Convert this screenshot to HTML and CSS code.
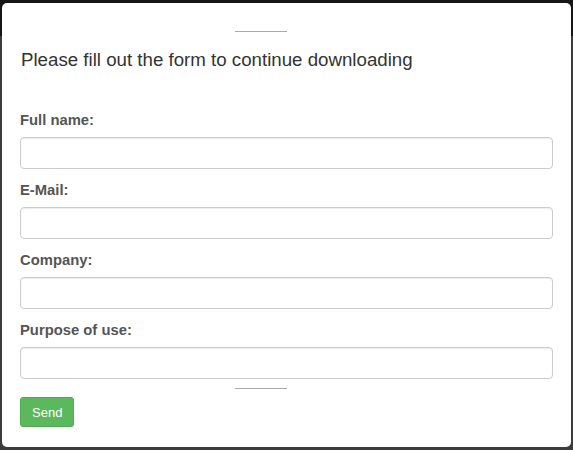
FILE: index.html
```html
<!DOCTYPE html>
<html>
<head>
<meta charset="utf-8">
<link rel="stylesheet" href="styles.css">
</head>
<body>
<div class="modal">
  <div class="divider"></div>
  <h4 class="title">Please fill out the form to continue downloading</h4>
  <form class="form">
    <div class="field">
      <label class="label">Full name:</label>
      <input class="input" type="text">
    </div>
    <div class="field">
      <label class="label">E-Mail:</label>
      <input class="input" type="text">
    </div>
    <div class="field">
      <label class="label">Company:</label>
      <input class="input" type="text">
    </div>
    <div class="field field-last">
      <label class="label">Purpose of use:</label>
      <input class="input" type="text">
    </div>
    <div class="divider divider-bottom"></div>
    <button class="btn" type="button">Send</button>
  </form>
</div>
</body>
</html>
```

FILE: styles.css
```css
html, body {
  margin: 0;
  padding: 0;
}
body {
  width: 573px;
  height: 450px;
  overflow: hidden;
  background: linear-gradient(to bottom, #161616 0, #161616 36px, #3c3c3c 36px, #3c3c3c 100%);
  font-family: "Liberation Sans", Arial, sans-serif;
  color: #333;
}
.modal {
  box-sizing: border-box;
  margin: 3px 2px 0;
  width: 569px;
  height: 444px;
  background: #fff;
  border-radius: 5px;
  padding: 28px 18px 0;
}
.divider {
  width: 52px;
  height: 1px;
  background: #aaa;
  margin-left: 215px;
}
.title {
  margin: 18px 0 0 1px;
  font-size: 18.7px;
  line-height: 20px;
  font-weight: normal;
  color: #333;
}
.form {
  margin-top: 40px;
}
.field {
  display: flex;
  flex-direction: column;
  margin-bottom: 11px;
}
.field-last {
  margin-bottom: 0;
}
.label {
  font-size: 14.8px;
  line-height: 20px;
  font-weight: bold;
  color: #555;
  margin-bottom: 7px;
}
.input {
  box-sizing: border-box;
  height: 32px;
  width: 533px;
  margin: 0;
  border: 1px solid #ccc;
  border-radius: 4px;
  box-shadow: inset 0 1px 1px rgba(0,0,0,.075);
  background: #fff;
  font: inherit;
  padding: 6px 12px;
}
.divider-bottom {
  margin-top: 9px;
}
.btn {
  margin-top: 8px;
  height: 30px;
  padding: 0 11px;
  border: 1px solid #4cae4c;
  border-radius: 3px;
  background: #5cb85c;
  color: #fff;
  font-family: "Liberation Sans", Arial, sans-serif;
  font-size: 13px;
  cursor: pointer;
}
```
